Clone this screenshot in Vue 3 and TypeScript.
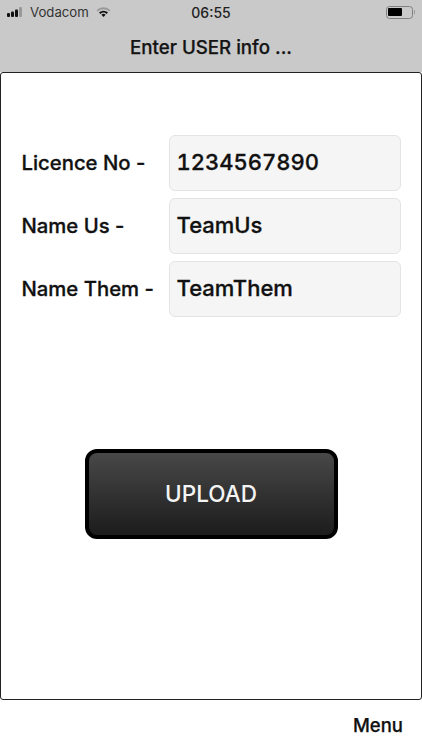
<script setup lang="ts">
interface Field { label: string; value: string }
const fields: Field[] = [
  { label: 'Licence No -', value: '1234567890' },
  { label: 'Name Us -', value: 'TeamUs' },
  { label: 'Name Them -', value: 'TeamThem' },
]
</script>

<template>
  <div class="screen">
    <header class="top">
      <div class="status">
        <div class="status-left">
          <svg class="signal" width="18" height="10" viewBox="0 0 18 10">
            <rect x="0" y="6" width="3" height="4" rx="1" fill="#111" />
            <rect x="4" y="4.5" width="3" height="5.5" rx="1" fill="#111" />
            <rect x="8" y="2.5" width="3" height="7.5" rx="1" fill="#111" />
            <rect x="12" y="0" width="3" height="10" rx="1" fill="#999" />
          </svg>
          <span class="carrier">Vodacom</span>
          <svg class="wifi" width="15" height="10" viewBox="0 0 15 10">
            <path d="M0.5 3.2 A10 10 0 0 1 14.5 3.2 L13.2 4.6 A8 8 0 0 0 1.8 4.6 Z" fill="#999" />
            <path d="M3 5.6 A6.6 6.6 0 0 1 12 5.6 L10.6 7 A4.6 4.6 0 0 0 4.4 7 Z" fill="#111" />
            <path d="M5.4 7.8 A3 3 0 0 1 9.6 7.8 L7.5 10 Z" fill="#111" />
          </svg>
        </div>
        <span class="time">06:55</span>
        <div class="battery">
          <div class="battery-body"><div class="battery-level"></div></div>
          <div class="battery-tip"></div>
        </div>
      </div>
      <h1 class="title">Enter USER info ...</h1>
    </header>

    <main class="panel">
      <div class="form">
        <div v-for="f in fields" :key="f.label" class="row">
          <span class="label">{{ f.label }}</span>
          <div class="input">{{ f.value }}</div>
        </div>
      </div>
      <button class="upload" type="button">UPLOAD</button>
    </main>

    <footer class="bottom">
      <span class="menu">Menu</span>
    </footer>
  </div>
</template>

<style>
html, body { margin: 0; background: #fff; }
</style>

<style scoped>
.screen {
  width: 422px;
  height: 750px;
  display: flex;
  flex-direction: column;
  overflow: hidden;
  background: #fff;
  color: #111;
  font-family: Inter, "Liberation Sans", sans-serif;
}
.top {
  height: 72px;
  flex: none;
  background: #c9c9c9;
  display: flex;
  flex-direction: column;
}
.status {
  height: 24px;
  padding: 0 7px;
  display: grid;
  grid-template-columns: 1fr auto 1fr;
  align-items: center;
}
.status-left {
  display: flex;
  align-items: center;
  gap: 5px;
}
.carrier {
  font-size: 13.2px;
  color: #333;
}
.wifi { margin-left: 2px; }
.time {
  font-size: 14px;
  font-weight: 500;
  color: #222;
}
.battery {
  justify-self: end;
  display: flex;
  align-items: center;
}
.battery-body {
  width: 27px;
  height: 13px;
  box-sizing: border-box;
  border: 1px solid #808080;
  border-radius: 3.5px;
  padding: 1.5px;
}
.battery-level {
  width: 14px;
  height: 8px;
  background: #000;
  border-radius: 1px;
}
.battery-tip {
  width: 1.5px;
  height: 4px;
  margin-left: 1px;
  background: #999;
}
.title {
  margin: 0;
  flex: 1;
  display: flex;
  align-items: center;
  justify-content: center;
  padding-bottom: 2px;
  font-size: 18.7px;
  font-weight: 500;
  -webkit-text-stroke: 0.25px #141414;
  color: #141414;
}
.panel {
  height: 628px;
  flex: none;
  box-sizing: border-box;
  border: 1.5px solid #222;
  border-radius: 3px;
  background: #fff;
  display: flex;
  flex-direction: column;
  align-items: center;
}
.form {
  width: 100%;
  box-sizing: border-box;
  padding: 62px 20px 0 20.5px;
  display: flex;
  flex-direction: column;
  gap: 7px;
}
.row {
  display: flex;
  align-items: center;
  height: 56px;
}
.label {
  width: 147px;
  flex: none;
  padding-bottom: 2px;
  font-size: 20.3px;
  font-weight: 500;
  -webkit-text-stroke: 0.3px #111;
  color: #111;
  white-space: nowrap;
}
.input {
  flex: 1;
  height: 56px;
  box-sizing: border-box;
  display: flex;
  align-items: center;
  padding: 0 7px 2px;
  background: #f5f5f5;
  border: 1px solid #e4e4e4;
  border-radius: 6px;
  font-size: 22px;
  font-weight: 500;
  -webkit-text-stroke: 0.3px #111;
  font-variant-numeric: tabular-nums;
  color: #111;
}
.upload {
  margin-top: 132px;
  width: 253px;
  height: 90px;
  box-sizing: border-box;
  border: 4px solid #000;
  border-radius: 12px;
  padding-bottom: 3px;
  background: linear-gradient(#484848, #1c1c1c);
  color: #f4f4f4;
  font-family: inherit;
  font-size: 22.5px;
  font-weight: 500;
}
.bottom {
  flex: 1;
  display: flex;
  align-items: center;
  justify-content: flex-end;
  padding: 0 19px 0 0;
}
.menu {
  font-size: 18.5px;
  font-weight: 500;
  -webkit-text-stroke: 0.25px #111;
  color: #111;
}
</style>
